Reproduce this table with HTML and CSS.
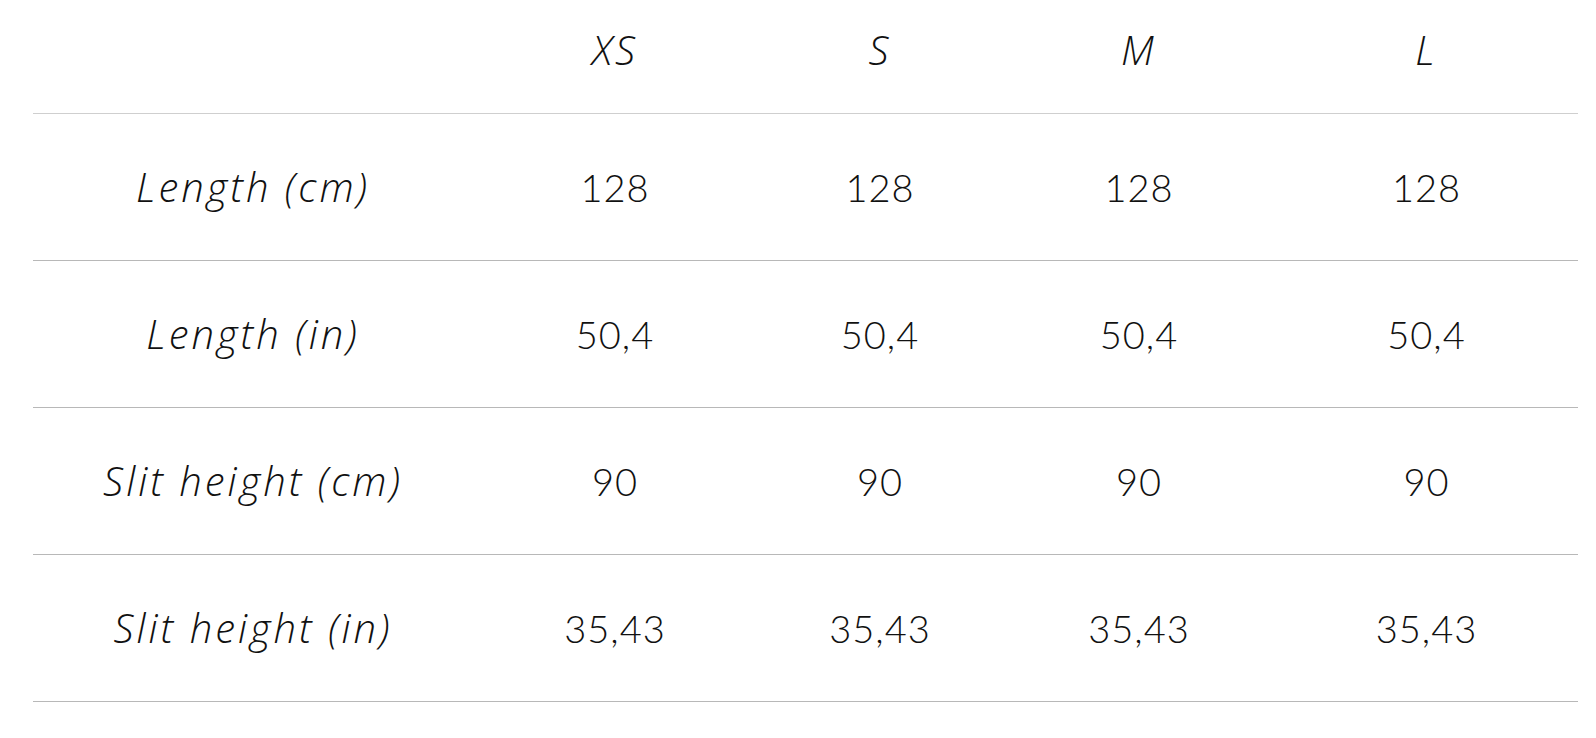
FILE: index.html
```html
<!DOCTYPE html>
<html lang="en">
<head>
<meta charset="utf-8">
<title>Size guide</title>
<link rel="stylesheet" href="styles.css">
</head>
<body>
<table class="size-table">
  <colgroup>
    <col class="c-label">
    <col class="c-xs">
    <col class="c-s">
    <col class="c-m">
    <col class="c-l">
  </colgroup>
  <thead>
    <tr class="head-row">
      <th></th>
      <th>XS</th>
      <th>S</th>
      <th>M</th>
      <th>L</th>
    </tr>
  </thead>
  <tbody>
    <tr class="row">
      <th>Length (cm)</th>
      <td>128</td><td>128</td><td>128</td><td>128</td>
    </tr>
    <tr class="row">
      <th>Length (in)</th>
      <td>50,4</td><td>50,4</td><td>50,4</td><td>50,4</td>
    </tr>
    <tr class="row">
      <th>Slit height (cm)</th>
      <td>90</td><td>90</td><td>90</td><td>90</td>
    </tr>
    <tr class="row">
      <th>Slit height (in)</th>
      <td>35,43</td><td>35,43</td><td>35,43</td><td>35,43</td>
    </tr>
  </tbody>
</table>
</body>
</html>
```
FILE: styles.css
```css
html, body {
  margin: 0;
  padding: 0;
  background: #ffffff;
}

body {
  font-family: "Lato", "Open Sans", "Liberation Sans", sans-serif;
  color: #111111;
}

.size-table {
  margin-left: 33px;
  width: 1545px;
  border-collapse: collapse;
  table-layout: fixed;
}

.c-label { width: 440px; }
.c-xs { width: 284px; }
.c-s { width: 246px; }
.c-m { width: 272px; }
.c-l { width: 303px; }

.size-table th,
.size-table td {
  padding: 0;
  text-align: center;
  vertical-align: middle;
  font-size: 38px;
  font-weight: 300;
  line-height: 1;
}

.size-table td {
  letter-spacing: 1px;
}

.size-table th {
  font-family: "Open Sans", "Lato", sans-serif;
  font-style: italic;
  font-weight: 300;
  font-size: 40px;
  letter-spacing: 3px;
}

.head-row th {
  height: 99px;
  padding-bottom: 14px;
  border-bottom: 1px solid #cfcfcf;
}

.row th,
.row td {
  height: 146px;
  border-bottom: 1px solid #b8b8b8;
}
```
